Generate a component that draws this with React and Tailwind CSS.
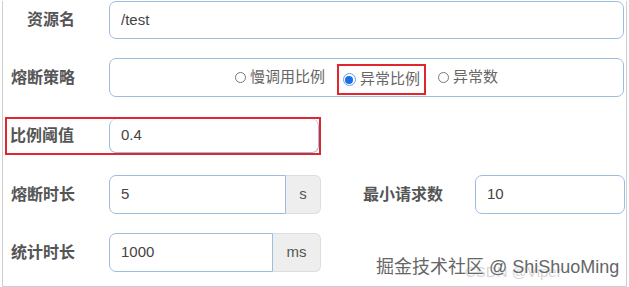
import React from 'react';

const labelCls = "w-[106px] shrink-0 pr-[34px] text-right text-[16px] font-bold text-[#555] whitespace-nowrap";
const inputCls = "h-full border border-[#9dbde0] bg-white pl-[11px] flex items-center text-[15px] text-[#444]";

const Radio = ({ label, checked }) => (
  <span className="flex items-center gap-[4px] text-[15px] text-[#666]">
    {checked ? (
      <span className="w-[13px] h-[13px] rounded-full border border-[#6aa0e8] flex items-center justify-center bg-white">
        <span className="w-[8px] h-[8px] rounded-full bg-[#1a6fe8]" />
      </span>
    ) : (
      <span className="w-[11px] h-[11px] rounded-full border border-[#777] bg-white" />
    )}
    {label}
  </span>
);

const App = () => {
  return (
    <div className="w-[629px] h-[287px] bg-white overflow-hidden" style={{ fontFamily: '"Liberation Sans", "Noto Sans CJK SC", sans-serif' }}>
      <div className="relative ml-[2px] w-[625px] h-[286px] border-l border-r border-b border-[#cfcfcf]">
        {/* 资源名 */}
        <div className="flex items-center h-[38px] mt-[1px]">
          <div className={labelCls}>资源名</div>
          <div className={`${inputCls} w-[515px] rounded-[7px]`}>/test</div>
        </div>

        {/* 熔断策略 */}
        <div className="flex items-center h-[39px] mt-[19px]">
          <div className={labelCls}>熔断策略</div>
          <div className="h-full w-[515px] rounded-[7px] border border-[#9dbde0] flex items-center justify-center gap-[12px]">
            <Radio label="慢调用比例" />
            <div className="flex items-center h-[31px] mt-[4px] px-[4px] border-2 border-[#e0262f]">
              <Radio label="异常比例" checked />
            </div>
            <Radio label="异常数" />
          </div>
        </div>

        {/* 比例阈值 */}
        <div className="flex items-center h-[38px] mt-[20px] ml-[2px] w-[316px] border-2 border-[#e0262f]">
          <div className="w-[102px] shrink-0 pl-[3px] text-[16px] font-bold text-[#555] whitespace-nowrap">比例阈值</div>
          <div className={`${inputCls} w-[210px] rounded-[7px] border-t-0`}>0.4</div>
        </div>

        {/* 熔断时长 / 最小请求数 */}
        <div className="flex items-center h-[39px] mt-[20px]">
          <div className={labelCls}>熔断时长</div>
          <div className={`${inputCls} w-[177px] rounded-l-[7px] border-[#6fa3dc]`}>5</div>
          <div className="h-full w-[35px] flex items-center justify-center rounded-r-[6px] border border-l-0 border-[#ddd] bg-[#eee] text-[15px] text-[#555]">s</div>
          <div className="ml-[42px] w-[112px] shrink-0 text-[16px] font-bold text-[#555] whitespace-nowrap">最小请求数</div>
          <div className={`${inputCls} w-[150px] rounded-[7px] border-[#6fa3dc]`}>10</div>
        </div>

        {/* 统计时长 */}
        <div className="flex items-center h-[39px] mt-[19px]">
          <div className={labelCls}>统计时长</div>
          <div className={`${inputCls} w-[164px] rounded-l-[7px] border-[#6fa3dc]`}>1000</div>
          <div className="h-full w-[48px] flex items-center justify-center rounded-r-[6px] border border-l-0 border-[#ddd] bg-[#eee] text-[15px] text-[#555]">ms</div>
        </div>

        {/* watermark */}
        <div className="absolute left-[462px] top-[260px] text-[15px] text-[#d6d6d6] whitespace-nowrap">CSDN @Viper</div>
        <div className="absolute left-[373px] top-[253px] text-[18px] text-[#666] whitespace-nowrap [text-shadow:0_0_2px_#fff]">掘金技术社区 @ ShiShuoMing</div>
      </div>
    </div>
  );
};

export default App;
